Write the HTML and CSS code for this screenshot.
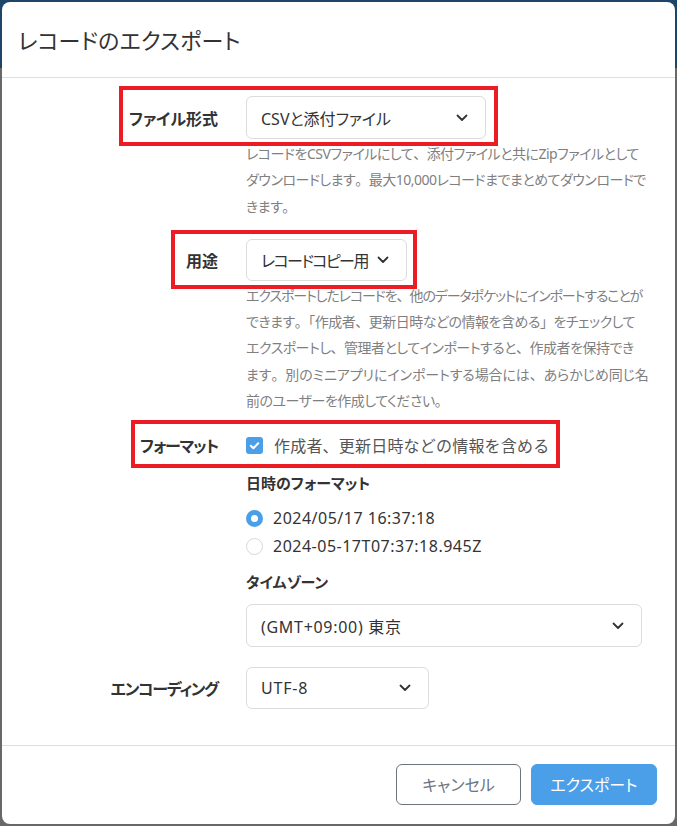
FILE: index.html
```html
<!DOCTYPE html>
<html lang="ja">
<head>
<meta charset="utf-8">
<title>レコードのエクスポート</title>
<link rel="stylesheet" href="styles.css">
</head>
<body>
<div class="dialog">
  <div class="dialog-header">
    <h1 class="dialog-title">レコードのエクスポート</h1>
  </div>
  <div class="dialog-body">
    <div class="field field-file">
      <span class="annot annot-1"></span>
      <label class="field-label lbl-file">ファイル形式</label>
      <div class="select select-file">
        <span class="select-value">CSVと添付ファイル</span>
        <svg class="chev" viewBox="0 0 12 8" width="12" height="8"><path d="M1.5 1.5 6 6l4.5-4.5" fill="none" stroke="#333" stroke-width="1.8" stroke-linecap="round" stroke-linejoin="round"/></svg>
      </div>
    </div>
    <p class="desc"><span class="ln">レコードをCSVファイルにして<span class="pn">、</span>添付ファイルと共にZipファイルとして</span><span class="ln">ダウンロードします<span class="pn">。</span>最大10,000レコードまでまとめてダウンロードで</span><span class="ln">きます<span class="pn">。</span></span></p>

    <div class="field field-use">
      <span class="annot annot-2"></span>
      <label class="field-label lbl-use">用途</label>
      <div class="select select-use">
        <span class="select-value">レコードコピー用</span>
        <svg class="chev" viewBox="0 0 12 8" width="12" height="8"><path d="M1.5 1.5 6 6l4.5-4.5" fill="none" stroke="#333" stroke-width="1.8" stroke-linecap="round" stroke-linejoin="round"/></svg>
      </div>
    </div>
    <p class="desc"><span class="ln ln-tight">エクスポートしたレコードを<span class="pn">、</span>他のデータポケットにインポートすることが</span><span class="ln">できます<span class="pn">。「</span>作成者<span class="pn">、</span>更新日時などの情報を含める<span class="pn">」</span>をチェックして</span><span class="ln">エクスポートし<span class="pn">、</span>管理者としてインポートすると<span class="pn">、</span>作成者を保持でき</span><span class="ln ln-loose">ます<span class="pn">。</span>別のミニアプリにインポートする場合には<span class="pn">、</span>あらかじめ同じ名</span><span class="ln">前のユーザーを作成してください<span class="pn">。</span></span></p>

    <div class="field field-format">
      <span class="annot annot-3"></span>
      <label class="field-label lbl-format">フォーマット</label>
      <div class="check">
        <span class="checkbox"><svg viewBox="0 0 17 17" width="17" height="17"><path d="M4.8 8.8 7.4 11.2 12.2 6.2" fill="none" stroke="#fff" stroke-width="2" stroke-linecap="round" stroke-linejoin="round"/></svg></span>
        <span class="check-text">作成者、更新日時などの情報を含める</span>
      </div>
    </div>

    <div class="sub">
      <div class="sub-title">日時のフォーマット</div>
      <div class="radios">
        <div class="radio-row"><span class="radio on"></span><span class="radio-text">2024/05/17 16:37:18</span></div>
        <div class="radio-row"><span class="radio"></span><span class="radio-text">2024-05-17T07:37:18.945Z</span></div>
      </div>
      <div class="sub-title tz-title">タイムゾーン</div>
      <div class="select select-tz">
        <span class="select-value">(GMT+09:00) 東京</span>
        <svg class="chev" viewBox="0 0 12 8" width="12" height="8"><path d="M1.5 1.5 6 6l4.5-4.5" fill="none" stroke="#333" stroke-width="1.8" stroke-linecap="round" stroke-linejoin="round"/></svg>
      </div>
    </div>

    <div class="field field-enc">
      <label class="field-label lbl-enc">エンコーディング</label>
      <div class="select select-enc">
        <span class="select-value">UTF-8</span>
        <svg class="chev" viewBox="0 0 12 8" width="12" height="8"><path d="M1.5 1.5 6 6l4.5-4.5" fill="none" stroke="#333" stroke-width="1.8" stroke-linecap="round" stroke-linejoin="round"/></svg>
      </div>
    </div>
  </div>
  <div class="dialog-footer">
    <button class="btn btn-cancel">キャンセル</button>
    <button class="btn btn-primary">エクスポート</button>
  </div>
</div>
</body>
</html>
```

FILE: styles.css
```css
* { box-sizing: border-box; }
html, body { margin: 0; padding: 0; }
body {
  width: 677px;
  height: 826px;
  padding: 2px;
  background: linear-gradient(to bottom, #1e4468 0, #1e4468 68px, #686868 68px, #686868 100%);
  font-family: "Noto Sans", "Noto Sans CJK JP", sans-serif;
  font-feature-settings: "palt";
  color: #333;
  overflow: hidden;
}
.dialog {
  position: relative;
  width: 673px;
  height: 822px;
  background: #fff;
  border-radius: 8px;
  display: flex;
  flex-direction: column;
}
.dialog-header {
  height: 76px;
  border-bottom: 1px solid #dedede;
  display: flex;
  align-items: center;
  padding: 0 0 2px 16px;
}
.dialog-title {
  margin: 0;
  font-size: 22px;
  font-weight: 400;
  color: #333;
  letter-spacing: 0.2px;
}
.dialog-body {
  flex: 1;
  padding: 18px 33px 0 0;
}
.field {
  position: relative;
  display: grid;
  grid-template-columns: 216px 1fr;
  column-gap: 28px;
  align-items: center;
}
.field-label {
  text-align: right;
  font-weight: 700;
  font-size: 16px;
  color: #333;
  white-space: nowrap;
}
.lbl-enc { letter-spacing: -1.3px; }
.lbl-format { letter-spacing: -1.1px; }
.select {
  height: 43px;
  border: 1px solid #dcdcdc;
  border-radius: 6px;
  background: #fff;
  display: flex;
  align-items: center;
  justify-content: space-between;
  padding: 0 17px 0 14px;
  font-size: 16px;
  color: #333;
  white-space: nowrap;
}
.select-file { width: 240px; }
.select-use { width: 161px; height: 42px; }
.select-use .select-value { letter-spacing: -1.6px; }
.select-enc { width: 183px; height: 42px; }
.select-enc .select-value { letter-spacing: 0.8px; }
.select-tz { width: 396px; }
.select-tz .select-value { letter-spacing: 0.7px; }
.chev { flex: none; }
.desc {
  margin: 2px 0 0 244px;
  font-size: 14px;
  line-height: 26.3px;
  color: #7f7f7f;
  letter-spacing: -0.5px;
}
.ln {
  display: block;
  white-space: nowrap;
}
.ln-tight { letter-spacing: -1.1px; }
.ln-loose { letter-spacing: -0.1px; }
.pn { font-feature-settings: normal; }
.field-use { margin-top: 19px; }
.field-format { margin-top: 18px; }
.check {
  display: flex;
  align-items: center;
  height: 26px;
}
.checkbox {
  width: 17px;
  height: 17px;
  border-radius: 3px;
  background: #4a9fe8;
  display: inline-flex;
  margin-right: 11px;
}
.check-text {
  font-size: 16px;
  color: #555;
  font-feature-settings: normal;
  letter-spacing: 0.2px;
}
.sub {
  margin: 12px 0 0 244px;
}
.sub-title {
  font-size: 15px;
  font-weight: 700;
  line-height: 26px;
  color: #333;
}
.radios {
  margin-top: 8px;
}
.radio-row {
  height: 28px;
  display: flex;
  align-items: center;
}
.radio {
  width: 17px;
  height: 17px;
  border-radius: 50%;
  border: 1px solid #d5d8de;
  background: #fff;
  margin-right: 10px;
}
.radio.on {
  border: 5px solid #4a9fe8;
}
.radio-text {
  font-size: 16px;
  color: #333;
  letter-spacing: 0.5px;
}
.tz-title { margin-top: 9px; }
.select-tz { margin-top: 9px; }
.field-enc { margin-top: 20px; }
.dialog-footer {
  height: 79px;
  border-top: 1px solid #dedede;
  display: flex;
  justify-content: flex-end;
  align-items: center;
  gap: 10px;
  padding: 0 18px 2px 0;
}
.btn {
  height: 41px;
  border-radius: 6px;
  font-family: inherit;
  font-feature-settings: "palt";
  font-size: 16px;
  cursor: pointer;
}
.btn-cancel {
  width: 125px;
  background: #fff;
  border: 1px solid #6c757d;
  color: #6c757d;
}
.btn-primary {
  width: 126px;
  background: #4a9fe8;
  border: 1px solid #4a9fe8;
  color: #fff;
}
.annot {
  position: absolute;
  border: 4px solid #ec1c24;
  pointer-events: none;
}
.annot-1 { left: 117px; top: -10px; width: 379px; height: 60px; }
.annot-2 { left: 169px; top: -9px; width: 246px; height: 59px; }
.annot-3 { left: 129px; top: -12px; width: 429px; height: 48px; }
```
